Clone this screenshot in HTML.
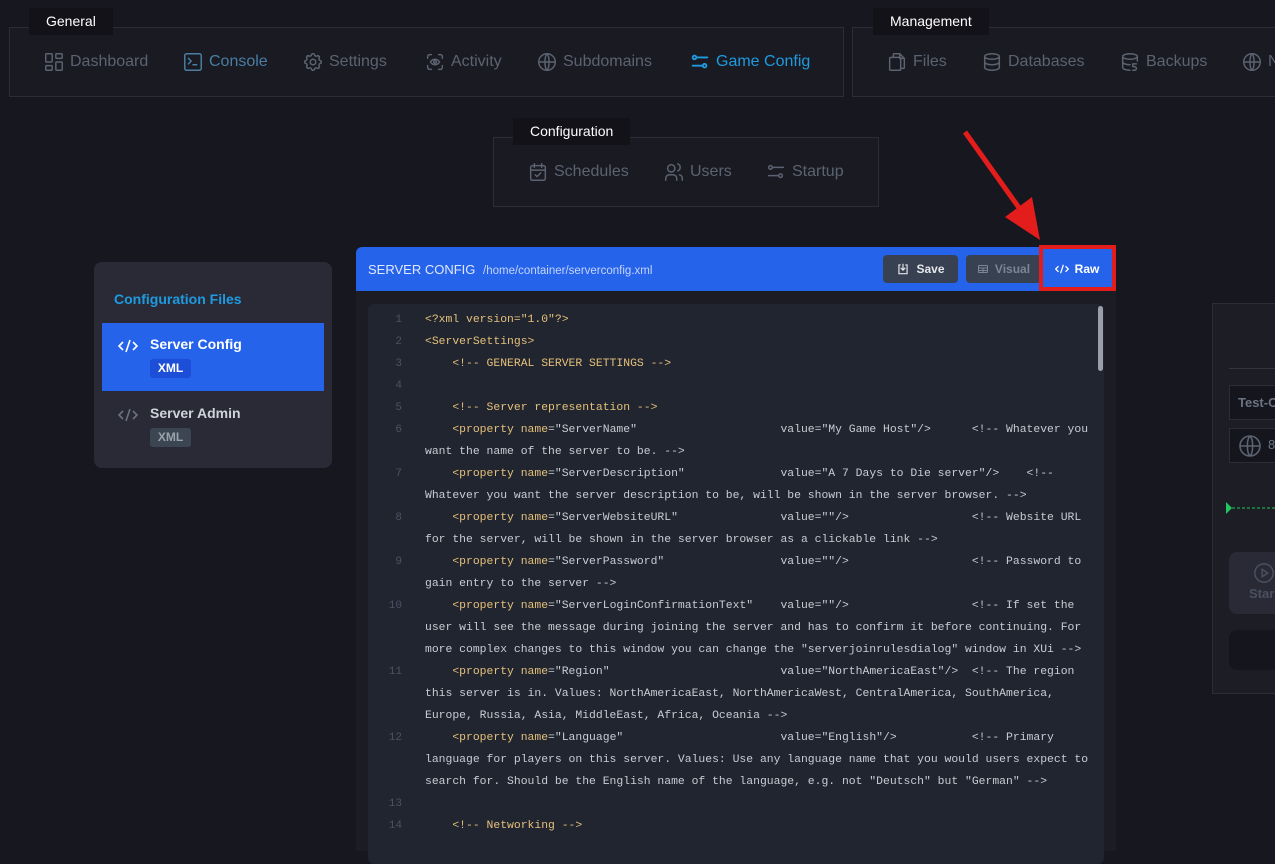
<!DOCTYPE html>
<html><head><meta charset="utf-8"><style>
*{box-sizing:border-box;margin:0;padding:0}
body{width:1275px;height:840px;background:#17171f;font-family:"Liberation Sans",sans-serif;position:relative;overflow:hidden;color:#c8ccd4}
.box{position:absolute;border:1px solid #2c2d37;background:#191a22}
.tab{position:absolute;background:#121218;color:#fff;font-size:14px;padding:0 17px;height:27px;line-height:27px}
.nav{position:absolute;top:51px;display:flex;align-items:center;font-size:16px;color:#5c6370;white-space:nowrap}
.nav svg{width:22px;height:22px;margin-right:5px;stroke:currentColor;fill:none;stroke-width:1.6;stroke-linecap:round;stroke-linejoin:round}
.code{position:absolute;left:368px;top:304px;width:736px;height:560px;background:#21252f;border-radius:6px;overflow:hidden}
.row{position:absolute;left:0;height:22px;line-height:22px;font-family:"Liberation Mono",monospace;font-size:11.4px;white-space:pre;color:#c8ccd4;margin-top:1px}
.ln{position:absolute;left:0;width:34px;text-align:right;color:#4b5263;font-family:"Liberation Mono",monospace;font-size:11px;line-height:22px;margin-top:1px}
.y{color:#e5c07b}
.btn{position:absolute;top:255px;height:28px;border-radius:4px;font-size:12px;font-weight:bold;display:flex;align-items:center;justify-content:center;gap:6px}
</style></head><body>

<div class="box" style="left:9px;top:27px;width:835px;height:70px"></div>
<div class="tab" style="left:29px;top:8px">General</div>
<div class="nav" style="left:43px"><svg viewBox="0 0 24 24"><rect x="3" y="3" width="7" height="9" rx="1"/><rect x="14" y="3" width="7" height="5" rx="1"/><rect x="14" y="12" width="7" height="9" rx="1"/><rect x="3" y="16" width="7" height="5" rx="1"/></svg>Dashboard</div>
<div class="nav" style="left:182px;color:#4a7ea3"><svg viewBox="0 0 24 24"><rect x="3" y="3" width="18" height="18" rx="2"/><path d="M7 8l3 3-3 3M12 15h4"/></svg>Console</div>
<div class="nav" style="left:302px"><svg viewBox="0 0 24 24"><circle cx="12" cy="12" r="3"/><path d="M10.3 4.3c.4-1.8 3-1.8 3.4 0a1.7 1.7 0 0 0 2.6 1.1c1.5-.9 3.3.8 2.4 2.4a1.7 1.7 0 0 0 1 2.5c1.8.4 1.8 3 0 3.4a1.7 1.7 0 0 0-1 2.6c.9 1.5-.9 3.3-2.4 2.4a1.7 1.7 0 0 0-2.6 1c-.4 1.8-3 1.8-3.4 0a1.7 1.7 0 0 0-2.6-1c-1.5.9-3.3-.9-2.4-2.4a1.7 1.7 0 0 0-1-2.6c-1.8-.4-1.8-3 0-3.4a1.7 1.7 0 0 0 1-2.5c-.9-1.6.9-3.3 2.4-2.4a1.7 1.7 0 0 0 2.6-1.1z"/></svg>Settings</div>
<div class="nav" style="left:424px"><svg viewBox="0 0 24 24"><path d="M4 8V6a2 2 0 0 1 2-2h2M4 16v2a2 2 0 0 0 2 2h2M16 4h2a2 2 0 0 1 2 2v2M16 20h2a2 2 0 0 0 2-2v-2"/><circle cx="12" cy="12" r="1.5"/><path d="M7 12c2.5-4 7.5-4 10 0-2.5 4-7.5 4-10 0"/></svg>Activity</div>
<div class="nav" style="left:536px"><svg viewBox="0 0 24 24"><circle cx="12" cy="12" r="9"/><path d="M3 12h18M12 3c3 3 3 15 0 18M12 3c-3 3-3 15 0 18"/></svg>Subdomains</div>
<div class="nav" style="left:689px;color:#1e9be0"><svg viewBox="0 0 24 24" style="stroke-width:2"><circle cx="6" cy="7" r="2"/><path d="M8 7h12"/><circle cx="17" cy="16" r="2"/><path d="M4 16h11"/></svg>Game Config</div>

<div class="box" style="left:852px;top:27px;width:440px;height:70px"></div>
<div class="tab" style="left:873px;top:8px">Management</div>
<div class="nav" style="left:886px"><svg viewBox="0 0 24 24"><path d="M8 7V4a1 1 0 0 1 1-1h6l5 5v10a1 1 0 0 1-1 1h-3"/><path d="M15 3v5h5"/><rect x="4" y="7" width="12" height="14" rx="1"/></svg>Files</div>
<div class="nav" style="left:981px"><svg viewBox="0 0 24 24"><ellipse cx="12" cy="6" rx="8" ry="3"/><path d="M4 6v12c0 1.7 3.6 3 8 3s8-1.3 8-3V6M4 12c0 1.7 3.6 3 8 3s8-1.3 8-3"/></svg>Databases</div>
<div class="nav" style="left:1119px"><svg viewBox="0 0 24 24"><ellipse cx="12" cy="6" rx="8" ry="3"/><path d="M4 6v12c0 1.7 3.6 3 8 3M20 6v5M4 12c0 1.7 3.6 3 8 3"/><path d="M19 14h-4v3h2a2 2 0 0 1 0 4h-2"/></svg>Backups</div>
<div class="nav" style="left:1241px"><svg viewBox="0 0 24 24"><circle cx="12" cy="12" r="9"/><path d="M3 12h18M12 3c3 3 3 15 0 18M12 3c-3 3-3 15 0 18"/></svg>N</div>

<div class="box" style="left:493px;top:137px;width:386px;height:70px"></div>
<div class="tab" style="left:513px;top:118px">Configuration</div>
<div class="nav" style="left:527px;top:161px"><svg viewBox="0 0 24 24"><rect x="4" y="5" width="16" height="16" rx="2"/><path d="M4 10h16M8 3v4M16 3v4M9 15l2 2 4-4"/></svg>Schedules</div>
<div class="nav" style="left:663px;top:161px"><svg viewBox="0 0 24 24"><circle cx="9" cy="8" r="4"/><path d="M3 21v-2a4 4 0 0 1 4-4h4a4 4 0 0 1 4 4v2M16 3.2a4 4 0 0 1 0 7.6M21 21v-2a4 4 0 0 0-3-3.9"/></svg>Users</div>
<div class="nav" style="left:765px;top:161px"><svg viewBox="0 0 24 24"><circle cx="6" cy="7" r="2"/><path d="M8 7h12"/><circle cx="17" cy="16" r="2"/><path d="M4 16h11"/></svg>Startup</div>

<!-- sidebar -->
<div style="position:absolute;left:94px;top:262px;width:238px;height:206px;background:#2a2a37;border-radius:8px"></div>
<div style="position:absolute;left:114px;top:291px;color:#1e9be0;font-weight:bold;font-size:14px">Configuration Files</div>
<div style="position:absolute;left:102px;top:323px;width:222px;height:68px;background:#2563eb"></div>
<svg style="position:absolute;left:118px;top:338px" width="20" height="16" viewBox="0 0 20 16" fill="none" stroke="#fff" stroke-width="1.6"><path d="M5 4L1 8l4 4M15 4l4 4-4 4M12 2L8 14"/></svg>
<div style="position:absolute;left:150px;top:336px;color:#fff;font-weight:bold;font-size:14px">Server Config</div>
<div style="position:absolute;left:150px;top:359px;width:41px;height:19px;background:#1d4ed8;border-radius:3px;color:#fff;font-size:12px;font-weight:bold;text-align:center;line-height:19px">XML</div>
<svg style="position:absolute;left:118px;top:407px" width="20" height="16" viewBox="0 0 20 16" fill="none" stroke="#6b7280" stroke-width="1.6"><path d="M5 4L1 8l4 4M15 4l4 4-4 4M12 2L8 14"/></svg>
<div style="position:absolute;left:150px;top:405px;color:#cfd3da;font-weight:bold;font-size:14px">Server Admin</div>
<div style="position:absolute;left:150px;top:428px;width:41px;height:19px;background:#3b4652;border-radius:3px;color:#9aa3ad;font-size:12px;font-weight:bold;text-align:center;line-height:19px">XML</div>

<!-- editor -->
<div style="position:absolute;left:356px;top:291px;width:760px;height:560px;background:#1b1c24"></div>
<div style="position:absolute;left:356px;top:247px;width:760px;height:44px;background:#2563eb;border-radius:6px 6px 0 0"></div>
<div style="position:absolute;left:368px;top:262px;color:#e0e8ff;font-size:13px">SERVER CONFIG <span style="font-size:11.5px;color:#c5d5fb;margin-left:4px">/home/container/serverconfig.xml</span></div>
<div class="btn" style="left:883px;width:75px;background:#374151;color:#e5e7eb"><svg width="14" height="14" viewBox="0 0 24 24" fill="none" stroke="#e5e7eb" stroke-width="2"><path d="M8 5H5v15h14V5h-3M12 3v10M8 10l4 4 4-4"/></svg>Save</div>
<div class="btn" style="left:966px;width:75px;background:#374151;color:#7c8592"><svg width="12" height="12" viewBox="0 0 24 24" fill="none" stroke="#7c8592" stroke-width="2"><rect x="3" y="5" width="18" height="14" rx="1"/><path d="M3 10h18M3 15h18M12 10v9"/></svg>Visual</div>
<div class="btn" style="left:1046px;width:62px;background:#2563eb;color:#fff"><svg width="14" height="12" viewBox="0 0 20 16" fill="none" stroke="#fff" stroke-width="1.8"><path d="M5 4L1 8l4 4M15 4l4 4-4 4M12 2L8 14"/></svg>Raw</div>
<div style="position:absolute;left:1039px;top:245px;width:77px;height:46px;border:4px solid #e31c1c"></div>
<svg style="position:absolute;left:0;top:0" width="1275" height="840"><line x1="965" y1="132" x2="1022" y2="212" stroke="#e31c1c" stroke-width="5"/><polygon points="1040,240 1005,217 1032,197" fill="#e31c1c"/></svg>

<div class="code">
<div style="position:absolute;right:1px;top:2px;width:5px;height:65px;background:#9aa0aa;border-radius:3px"></div>
<div class="ln" style="top:4px">1</div><div class="row" style="left:57px;top:4px"><span class="y">&lt;?xml version="1.0"?&gt;</span></div>
<div class="ln" style="top:26px">2</div><div class="row" style="left:57px;top:26px"><span class="y">&lt;ServerSettings&gt;</span></div>
<div class="ln" style="top:48px">3</div><div class="row" style="left:57px;top:48px"><span class="y">    &lt;!-- GENERAL SERVER SETTINGS --&gt;</span></div>
<div class="ln" style="top:70px">4</div>
<div class="ln" style="top:92px">5</div><div class="row" style="left:57px;top:92px"><span class="y">    &lt;!-- Server representation --&gt;</span></div>
<div class="ln" style="top:114px">6</div><div class="row" style="left:57px;top:114px">    <span class="y">&lt;property name</span>="ServerName"                     value="My Game Host"/&gt;      &lt;!-- Whatever you</div>
<div class="row" style="left:57px;top:136px">want the name of the server to be. --&gt;</div>
<div class="ln" style="top:158px">7</div><div class="row" style="left:57px;top:158px">    <span class="y">&lt;property name</span>="ServerDescription"              value="A 7 Days to Die server"/&gt;    &lt;!--</div>
<div class="row" style="left:57px;top:180px">Whatever you want the server description to be, will be shown in the server browser. --&gt;</div>
<div class="ln" style="top:202px">8</div><div class="row" style="left:57px;top:202px">    <span class="y">&lt;property name</span>="ServerWebsiteURL"               value=""/&gt;                  &lt;!-- Website URL</div>
<div class="row" style="left:57px;top:224px">for the server, will be shown in the server browser as a clickable link --&gt;</div>
<div class="ln" style="top:246px">9</div><div class="row" style="left:57px;top:246px">    <span class="y">&lt;property name</span>="ServerPassword"                 value=""/&gt;                  &lt;!-- Password to</div>
<div class="row" style="left:57px;top:268px">gain entry to the server --&gt;</div>
<div class="ln" style="top:290px">10</div><div class="row" style="left:57px;top:290px">    <span class="y">&lt;property name</span>="ServerLoginConfirmationText"    value=""/&gt;                  &lt;!-- If set the</div>
<div class="row" style="left:57px;top:312px">user will see the message during joining the server and has to confirm it before continuing. For</div>
<div class="row" style="left:57px;top:334px">more complex changes to this window you can change the "serverjoinrulesdialog" window in XUi --&gt;</div>
<div class="ln" style="top:356px">11</div><div class="row" style="left:57px;top:356px">    <span class="y">&lt;property name</span>="Region"                         value="NorthAmericaEast"/&gt;  &lt;!-- The region</div>
<div class="row" style="left:57px;top:378px">this server is in. Values: NorthAmericaEast, NorthAmericaWest, CentralAmerica, SouthAmerica,</div>
<div class="row" style="left:57px;top:400px">Europe, Russia, Asia, MiddleEast, Africa, Oceania --&gt;</div>
<div class="ln" style="top:422px">12</div><div class="row" style="left:57px;top:422px">    <span class="y">&lt;property name</span>="Language"                       value="English"/&gt;           &lt;!-- Primary</div>
<div class="row" style="left:57px;top:444px">language for players on this server. Values: Use any language name that you would users expect to</div>
<div class="row" style="left:57px;top:466px">search for. Should be the English name of the language, e.g. not "Deutsch" but "German" --&gt;</div>
<div class="ln" style="top:488px">13</div>
<div class="ln" style="top:510px">14</div><div class="row" style="left:57px;top:510px"><span class="y">    &lt;!-- Networking --&gt;</span></div>
</div>

<!-- right card -->
<div style="position:absolute;left:1212px;top:303px;width:80px;height:391px;background:#1d1d26;border:1px solid #2c2d37"></div>
<div style="position:absolute;left:1229px;top:368px;width:60px;height:1px;background:#33343e"></div>
<div style="position:absolute;left:1229px;top:385px;width:60px;height:35px;background:#15161d;border:1px solid #2c2d37;color:#6b7280;font-weight:bold;font-size:13px;line-height:33px;padding-left:8px">Test-C</div>
<div style="position:absolute;left:1229px;top:428px;width:60px;height:35px;background:#15161d;border:1px solid #2c2d37"></div>
<svg style="position:absolute;left:1238px;top:434px" width="24" height="24" viewBox="0 0 24 24" fill="none" stroke="#5c6370" stroke-width="1.6"><circle cx="12" cy="12" r="10"/><path d="M2 12h20M12 2c3.5 3 3.5 17 0 20M12 2c-3.5 3-3.5 17 0 20"/></svg>
<div style="position:absolute;left:1268px;top:437px;color:#6b7280;font-size:13px">8</div>
<svg style="position:absolute;left:1226px;top:502px" width="50" height="12"><polygon points="0,0 6,6 0,12" fill="#22c55e"/><line x1="6" y1="6" x2="50" y2="6" stroke="#22c55e" stroke-dasharray="3,2"/></svg>
<div style="position:absolute;left:1229px;top:552px;width:60px;height:62px;background:#2a2a36;border-radius:8px"></div>
<svg style="position:absolute;left:1253px;top:562px" width="22" height="22" viewBox="0 0 24 24" fill="none" stroke="#4b5060" stroke-width="1.6"><circle cx="12" cy="12" r="10"/><path d="M10 8l6 4-6 4z"/></svg>
<div style="position:absolute;left:1249px;top:586px;color:#4b5060;font-weight:bold;font-size:13px">Star</div>
<div style="position:absolute;left:1229px;top:630px;width:60px;height:40px;background:#15161d;border-radius:8px"></div>
</body></html>
